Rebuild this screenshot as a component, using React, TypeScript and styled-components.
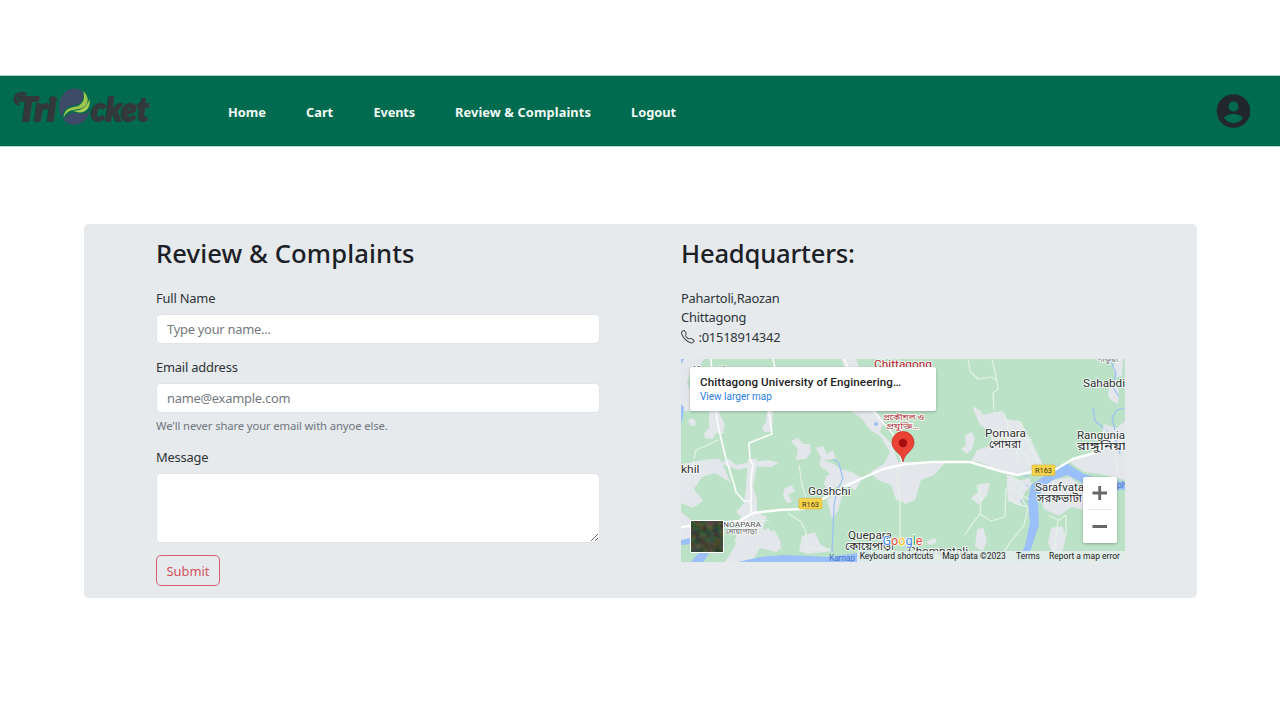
import React from "react";
import styled, { createGlobalStyle } from "styled-components";

const GlobalStyle = createGlobalStyle`
  * { box-sizing: border-box; }
  body {
    margin: 0;
    background: #fff;
    color: #2f3439;
    font-family: "Noto Sans", "Open Sans", sans-serif;
    font-size: 12.9px;
    letter-spacing: -0.2px;
  }
  h2, p { margin: 0; }
`;

const Page = styled.div`
  height: 720px;
  padding-top: 76px;
  overflow: hidden;
`;

const NavBar = styled.header`
  display: flex;
  align-items: center;
  height: 70px;
  background: #006b4e;
  box-shadow: 0 0 0 1px #b5d5ca;
`;

const Logo = styled.svg`
  width: 150px;
  height: 50px;
  margin: 0 0 8px 8px;
`;

const NavLinks = styled.nav`
  display: flex;
  flex: 1;
  padding-left: 70px;
`;

const NavLink = styled.a<{ $width: number; $spacing?: number }>`
  width: ${(p) => p.$width}px;
  padding-top: 1px;
  color: #f3faf7;
  font-size: 12.8px;
  font-weight: 700;
  letter-spacing: ${(p) => p.$spacing ?? 0}px;
  line-height: 20px;
  white-space: nowrap;
`;

const Avatar = styled.svg`
  width: 34px;
  height: 34px;
  margin: 0 30px 1px 0;
`;

const Panel = styled.main`
  display: grid;
  grid-template-columns: 444px 444px;
  column-gap: 81px;
  width: 1113px;
  height: 374px;
  margin: 78px 0 0 84px;
  padding: 14px 0 0 72px;
  border-radius: 5px;
  background: #e6eaed;
`;

const Title = styled.h2<{ $spacing: number }>`
  height: 32px;
  margin-bottom: 18px;
  color: #1b2026;
  font-size: 25.6px;
  font-weight: 500;
  letter-spacing: ${(p) => p.$spacing}px;
  line-height: 32px;
  white-space: nowrap;
`;

const Column = styled.section`
  display: flex;
  flex-direction: column;
  align-items: flex-start;
`;

const Label = styled.label`
  height: 20px;
  margin-bottom: 6px;
  line-height: 20px;
`;

const Input = styled.input`
  width: 444px;
  height: 30px;
  padding: 0 10px;
  border: 1px solid #dfe3e7;
  border-radius: 5px;
  background: #fff;
  font: inherit;
  letter-spacing: -0.25px;
  outline: 0;
  &::placeholder { color: #74797e; opacity: 1; }
`;

const Field = styled.div<{ $height: number }>`
  display: flex;
  flex-direction: column;
  height: ${(p) => p.$height}px;
`;

const Hint = styled.span`
  margin-top: 4px;
  color: #6f767d;
  font-size: 11.3px;
  letter-spacing: -0.13px;
  line-height: 17px;
`;

const TextArea = styled.textarea`
  display: block;
  width: 444px;
  height: 70px;
  border: 1px solid #dfe3e7;
  border-radius: 5px;
  background: #fff;
  font: inherit;
  outline: 0;
  resize: vertical;
`;

const Submit = styled.button`
  width: 64px;
  height: 31px;
  padding: 0;
  border: 1px solid #d6606e;
  border-radius: 5px;
  background: transparent;
  color: #d4525f;
  font: inherit;
  letter-spacing: 0;
`;

const Address = styled.p`
  height: 58px;
  margin: 1px 0 12px;
  letter-spacing: -0.23px;
  line-height: 19.3px;
  white-space: nowrap;
`;

const PhoneIcon = styled.svg`
  width: 13.5px;
  height: 13.5px;
  margin-right: 4px;
  vertical-align: -2px;
`;

const MapFrame = styled.div`
  position: relative;
  width: 444px;
  height: 203px;
  overflow: hidden;
  font-family: Roboto, sans-serif;
  letter-spacing: 0;
`;

const MapDrawing = styled.svg`
  display: block;
  width: 444px;
  height: 203px;
  text { font-family: Roboto, "Noto Sans Bengali", sans-serif; }
`;

const PlaceCard = styled.div`
  position: absolute;
  top: 8px;
  left: 9px;
  width: 246px;
  height: 44px;
  padding: 8px 10px;
  border-radius: 2px;
  background: #fff;
  box-shadow: 0 1px 3px rgba(0, 0, 0, 0.25);
  white-space: nowrap;
`;

const PlaceName = styled.div`
  color: #222;
  font-size: 11.6px;
  font-weight: 500;
  letter-spacing: 0.1px;
  line-height: 14px;
`;

const PlaceLink = styled.a`
  display: block;
  color: #2a7de1;
  font-size: 10px;
  line-height: 15px;
`;

const ZoomControl = styled.div`
  position: absolute;
  top: 118px;
  right: 8px;
  width: 34px;
  height: 66px;
  border-radius: 2px;
  background: #fff;
  box-shadow: 0 1px 3px rgba(0, 0, 0, 0.3);
`;

const Attribution = styled.div`
  position: absolute;
  right: 0;
  bottom: 0;
  display: flex;
  height: 11px;
  background: rgba(232, 238, 237, 0.85);
  color: #222;
  font-size: 8.5px;
  line-height: 11px;
  white-space: nowrap;
`;

const Credit = styled.span<{ $width: number }>`
  width: ${(p) => p.$width}px;
  text-align: center;
`;

const TricketLogo = () => (
  <Logo viewBox="8 82 150 50">
    <g
      fill="#33383a"
      stroke="#33383a"
      strokeWidth="1.8"
      strokeLinejoin="round"
      fontFamily="Lato, sans-serif"
      fontWeight="900"
      fontStyle="italic"
      fontSize="33"
    >
      <text x="17" y="120.500" textLength="39" lengthAdjust="spacingAndGlyphs">Tri</text>
      <text x="91" y="120.500" textLength="57.500" lengthAdjust="spacingAndGlyphs">cket</text>
    </g>
    <path d="M25 94C15 92 13 100 18 104" fill="none" stroke="#33383a" strokeWidth="3.500" strokeLinecap="round" />
    <ellipse cx="74.500" cy="106.700" rx="15.500" ry="18.300" fill="#3d4a68" />
    <path d="M62 121C62 108 69 106 76 105C82 104 85 98 82 90C92 96 93 106 87 113C81 115 76 112 72 113C67 114 65 117 62 121Z" fill="#006b4e" />
    <path d="M63.500 118C64 109 70 107.500 76 106.500C82 105.500 86 99 83 91C90 97 89 105 82 108C76 110.500 68 108 63.500 118Z" fill="#9fc54c" />
    <path d="M71 110.500C79 112 87 108 89.500 99C91 107 86 113 79 112.500C76 112 74 111 71 110.500Z" fill="#a9cb50" />
  </Logo>
);

const Town = "#e3e6ea";

const townAreas = [
  "M681 359H704L700 366L691 372L687 382L692 397L690 411L684 411L681 404Z",
  "M688 420L693 418L696 422L695 426L690 425Z",
  "M709 411H719L721 417L725 424L723 434L716 433L713 439L705 438L704 433L709 428Z",
  "M767 411H773L772 432L764 432L762 427L766 422Z",
  "M791 441L798 438L803 444L810 444L811 452L806 459L796 460L798 449Z",
  "M816 448L823 446L827 454L833 450L836 459L822 460Z",
  "M841 359H856L861 372L869 388L866 395L851 383Z",
  "M851 411H876L884 421L880 432L892 444L898 462H925L921 472L918 489L908 503L896 500L891 485L878 480L870 472L884 464L890 452L880 436L870 430L862 419Z",
  "M826 476L840 469L852 472L862 478L856 490L840 485L828 492L824 484Z",
  "M890 472L919 465L946 462L934 475L921 480L915 500L905 504L897 493L899 484Z",
  "M972 406L981 411L983 415L994 412L1002 411L1006 419L1020 421L1026 431L1037 452L1043 466L1031 474L1009 474L994 468L979 462L971 461L977 450L992 445L990 431L980 425L976 416Z",
  "M965 435L972 432L975 439L972 449L967 454L961 449L966 445Z",
  "M1109 388L1115 378L1119 391L1118 404L1112 401L1108 396Z",
  "M1116 359H1123L1122 376L1116 377L1113 368Z",
  "M1073 459L1091 454L1100 444L1104 424L1116 428L1125 421V480L1100 474L1084 472L1071 463Z",
  "M1007 474L1018 481L1029 478L1032 484L1025 492L1020 506L1008 501L1007 488Z",
  "M1039 487L1052 480L1070 477L1086 491L1084 510L1071 507L1059 516L1044 509L1041 500Z",
  "M1051 528L1062 526L1066 536L1063 550L1054 556L1048 543Z",
  "M978 484L990 483L987 495L979 505L971 498L979 491Z",
  "M977 530L983 527L987 541L983 551L975 547Z",
  "M681 464L703 460L713 459L720 459L725 470L731 483L725 479L715 473L702 477L694 489L703 501L693 508L681 503Z",
  "M748 459H757L756 472L753 487L757 499L757 512L767 517L763 528L768 534L774 530L781 542L777 552L760 548L752 562H725L735 546L737 530L742 518L736 512L744 503L746 488Z",
  "M784 489L792 485L795 492L788 494L792 502L787 503L783 496Z",
  "M761 532L768 528L773 534L780 542L781 549L774 552L763 543Z",
  "M802 536L815 532L820 544L832 551L808 554L799 551Z",
  "M827 500L838 490L843 492L838 511L832 519Z",
  "M681 512L690 519L690 540L681 540Z",
  "M708 459L718 464L729 459L736 465L751 462L769 460L779 463L771 467L752 466L738 470Z",
  "M820 459L834 464L844 472L837 481L829 473L820 466Z",
  "M927 541L935 538L937 542L932 545L928 544Z",
];

const minorRoads = [
  "M968 359L970 371L978 379L992 377L997 381L998 389L993 393L994 410",
  "M992 359L995 372L997 381",
  "M718 440L708 445L696 450L694 459M694 461L690 478L684 486",
  "M1004 413L1008 425L1006 437L1016 446L1018 461M1020 421L1027 439L1038 462",
  "M977 485L981 500L980 514L972 524L965 535M980 514L991 521L1005 517L1006 488",
  "M1028 508L1024 525L1009 544L1000 558",
  "M1049 516L1059 520L1066 515M1058 519L1054 553M1066 515L1066 535",
  "M1011 476L1024 484L1018 493L1029 499M1008 487L1018 492L1027 507L1016 503L1010 496",
  "M1016 446L1026 456L1029 466M1008 426L1020 438L1032 440",
  "M799 465L802 485L806 497M788 513L801 522L806 532L806 548L831 549",
  "M898 467V488L900 499V546",
  "M1103 427L1110 436L1115 454L1118 472",
  "M751 512L755 520L769 521M735 541L751 512",
];

const mainRoads = [
  "M711 359L712 375L716 411L718 426L726 459L734 484L736 492L744 501L750 501",
  "M773 359L775 368L769 411L772 434L749 443L750 459L753 465L751 479V512",
  "M844 359L848 368L873 411L893 434L898 451L903 464",
];

interface MapLabel {
  x: number;
  y: number;
  width: number;
  text: string;
  size?: number;
  color?: string;
}

const labels: MapLabel[] = [
  { x: 693, y: 374, width: 38, text: "Kagatia", size: 11 },
  { x: 874, y: 368, width: 58, text: "Chittagong", size: 11.5, color: "#b3202c" },
  { x: 1097, y: 362, width: 21, text: "পাকুয়া", size: 8, color: "#666" },
  { x: 1083, y: 387, width: 42, text: "Sahabdi", size: 11 },
  { x: 883, y: 420, width: 41, text: "প্রকৌশল ও", size: 8.6, color: "#b8323c" },
  { x: 886, y: 429, width: 33, text: "প্রযুক্তি…", size: 8.6, color: "#b8323c" },
  { x: 985, y: 437, width: 41, text: "Pomara", size: 11 },
  { x: 989, y: 448, width: 32, text: "পোমরা", size: 10.5 },
  { x: 1077, y: 439, width: 48, text: "Rangunia", size: 11 },
  { x: 1077, y: 450, width: 49, text: "রাঙ্গুনিয়া", size: 10.5 },
  { x: 681, y: 473, width: 18.5, text: "khil", size: 11 },
  { x: 808, y: 495, width: 42.5, text: "Goshchi", size: 11 },
  { x: 723, y: 526.5, width: 38, text: "NOAPARA", size: 7.3, color: "#555" },
  { x: 726, y: 534, width: 31, text: "নোয়াপাড়া", size: 8, color: "#666" },
  { x: 848, y: 539, width: 44, text: "Quepara", size: 11 },
  { x: 845, y: 550, width: 49, text: "কোয়েপাড়া", size: 10.5 },
  { x: 1035, y: 491, width: 49, text: "Sarafvata", size: 11 },
  { x: 1037, y: 502, width: 45, text: "সরফভাটা", size: 10.5 },
  { x: 908, y: 555, width: 60, text: "Chompatali", size: 11 },
];

const MapView = () => (
  <MapDrawing viewBox="681 359 444 203">
    <rect x="681" y="359" width="444" height="203" fill="#bbe2c6" />
    {townAreas.map((d) => <path key={d} d={d} fill={Town} />)}
    <g fill="#9bbff8">
      <path d="M681 359H684L682 363H681ZM681 404L684 407L683 418L681 424Z" />
      <path d="M681 540L690 538L691 544L681 545ZM691 562L700 552H710L703 562Z" />
      <path d="M738 562L760 557L784 555L830 557L857 553L870 550V562Z" />
      <path d="M1017 562L1025 546L1030 522L1028 500L1031 485L1043 477L1055 470L1059 465L1068 464L1084 474L1103 479L1125 482V490L1103 489L1085 484L1067 475L1053 480L1043 487L1038 500L1039 525L1031 549L1024 562Z" />
      <circle cx="876" cy="424" r="2" />
    </g>
    <g fill="none" stroke="#9bbff8" strokeWidth="1.2">
      <path d="M833 459L839 463L843 479L837 490L834 505L832 552" />
      <path d="M1093 408L1095 421L1105 429L1117 442L1120 454M1115 430L1112 418L1117 410L1125 408M1110 359L1116 373L1113 387L1119 397" />
      <path d="M1020 475L1029 476M1022 483L1028 486M1020 500L1027 502" strokeDasharray="3 2" />
    </g>
    <g fill="none" stroke="#e4f3e7" strokeWidth="1.2" strokeLinejoin="round">
      {minorRoads.map((d) => <path key={d} d={d} />)}
    </g>
    <g fill="none" stroke="#fafcfb" strokeWidth="1.7" strokeLinejoin="round">
      {mainRoads.map((d) => <path key={d} d={d} />)}
    </g>
    <path
      d="M681 527L739 521L753 513L779 510L803 509L823 499L843 487L863 478L883 469L906 464L933 462L970 462L1000 471L1017 475L1032 472L1053 471L1073 459L1094 453L1104 444L1125 434"
      fill="none"
      stroke="#fff"
      strokeWidth="2.4"
      strokeLinejoin="round"
    />
    {[[799, 498.5], [1032, 465]].map(([x, y]) => (
      <g key={x}>
        <rect x={x} y={y} width="23" height="10.500" rx="1" fill="#f7d34a" stroke="#d7b13a" strokeWidth=".6" />
        <text x={x + 11.5} y={y + 8} textAnchor="middle" fontSize="7.4" fill="#3b3519">R163</text>
      </g>
    ))}
    {labels.map((l) => (
      <text
        key={l.text}
        x={l.x}
        y={l.y}
        textLength={l.width}
        lengthAdjust="spacingAndGlyphs"
        fontSize={l.size}
        fill={l.color ?? "#2d3032"}
        stroke="#fff"
        strokeWidth="1.8"
        strokeOpacity=".85"
        paintOrder="stroke"
        strokeLinejoin="round"
      >
        {l.text}
      </text>
    ))}
    <text x="829" y="561" fontSize="8.500" fill="#4676c8" textLength="26">Karnap</text>
    <text x="1117" y="488" fontSize="8.500" fill="#4676c8">ph</text>
    <path d="M903 462C902 453 892 451 892 442.500A11 11 0 0 1 914 442.500C914 451 904 453 903 462Z" fill="#ea4335" stroke="#c5221f" strokeWidth=".7" />
    <circle cx="903" cy="443" r="4.200" fill="#a50e0e" />
    <text x="882.500" y="545" fontSize="12" textLength="40" lengthAdjust="spacingAndGlyphs" strokeWidth="1.500" stroke="#fff" paintOrder="stroke">
      <tspan fill="#4285f4">G</tspan>
      <tspan fill="#ea4335">o</tspan>
      <tspan fill="#fbbc04">o</tspan>
      <tspan fill="#4285f4">g</tspan>
      <tspan fill="#34a853">l</tspan>
      <tspan fill="#ea4335">e</tspan>
    </text>
    <defs>
      <filter id="terrain" x="0" y="0" width="1" height="1" colorInterpolationFilters="sRGB">
        <feTurbulence type="fractalNoise" baseFrequency=".14" numOctaves="3" seed="4" />
        <feColorMatrix values=".35 0 0 0 .07  0 .3 0 0 .14  0 0 .25 0 .08  0 0 0 0 1" />
      </filter>
    </defs>
    <rect x="690" y="520" width="34" height="33" rx="1.500" fill="#fff" />
    <rect x="691" y="521" width="32" height="31" filter="url(#terrain)" />
  </MapDrawing>
);

export default function App() {
  return (
    <>
      <GlobalStyle />
      <Page>
        <NavBar>
          <TricketLogo />
          <NavLinks>
            <NavLink $width={78}>Home</NavLink>
            <NavLink $width={67.5}>Cart</NavLink>
            <NavLink $width={81.5} $spacing={-0.15}>Events</NavLink>
            <NavLink $width={176} $spacing={0.11}>Review &amp; Complaints</NavLink>
            <NavLink $width={60}>Logout</NavLink>
          </NavLinks>
          <Avatar viewBox="0 0 34 34">
            <circle cx="17.500" cy="17" r="16.800" fill="#21272b" />
            <circle cx="17.500" cy="12.500" r="5" fill="#006b4e" />
            <path d="M8 24C9.500 21 14.500 20 17.500 20S25.500 21 27 24C24.500 27.500 21 29 17.500 29S10.500 27.500 8 24Z" fill="#006b4e" />
          </Avatar>
        </NavBar>
        <Panel>
          <Column>
            <Title $spacing={0.11}>Review &amp; Complaints</Title>
            <Field $height={69}>
              <Label>Full Name</Label>
              <Input placeholder="Type your name..." />
            </Field>
            <Field $height={90}>
              <Label>Email address</Label>
              <Input placeholder="name@example.com" />
              <Hint>We'll never share your email with anyoe else.</Hint>
            </Field>
            <Field $height={108}>
              <Label>Message</Label>
              <TextArea />
            </Field>
            <Submit type="button">Submit</Submit>
          </Column>
          <Column>
            <Title $spacing={-0.2}>Headquarters:</Title>
            <Address>
              Pahartoli,Raozan
              <br />
              Chittagong
              <br />
              <PhoneIcon viewBox="0 0 16 16" fill="currentColor">
                <path d="M3.654 1.328a.678.678 0 0 0-1.015-.063L1.605 2.300c-.483.484-.661 1.169-.450 1.770a17.568 17.568 0 0 0 4.168 6.608 17.569 17.569 0 0 0 6.608 4.168c.601.211 1.286.033 1.770-.450l1.034-1.034a.678.678 0 0 0-.063-1.015l-2.307-1.794a.678.678 0 0 0-.580-.122l-2.190.547a1.745 1.745 0 0 1-1.657-.459L5.482 8.062a1.745 1.745 0 0 1-.460-1.657l.548-2.190a.678.678 0 0 0-.122-.580L3.654 1.328zM1.884.511a1.745 1.745 0 0 1 2.612.163L6.290 2.980c.329.423.445.974.315 1.494l-.547 2.190a.678.678 0 0 0 .178.643l2.457 2.457a.678.678 0 0 0 .644.178l2.189-.547a1.745 1.745 0 0 1 1.494.315l2.306 1.794c.829.645.905 1.870.163 2.611l-1.034 1.034c-.740.740-1.846 1.065-2.877.702a18.634 18.634 0 0 1-7.010-4.420 18.634 18.634 0 0 1-4.420-7.009c-.362-1.030-.037-2.137.703-2.877L1.885.511z" />
              </PhoneIcon>
              :01518914342
            </Address>
            <MapFrame>
              <MapView />
              <PlaceCard>
                <PlaceName>Chittagong University of Engineering…</PlaceName>
                <PlaceLink>View larger map</PlaceLink>
              </PlaceCard>
              <ZoomControl>
                <svg width="34" height="66" viewBox="0 0 34 66">
                  <path d="M9.500 16H24M16.700 9V23M9.500 49.500H24" stroke="#666" strokeWidth="2.800" />
                  <path d="M5 32.500H29" stroke="#e6e6e6" />
                </svg>
              </ZoomControl>
              <Attribution>
                <Credit $width={79}>Keyboard shortcuts</Credit>
                <Credit $width={76}>Map data ©2023</Credit>
                <Credit $width={32}>Terms</Credit>
                <Credit $width={81}>Report a map error</Credit>
              </Attribution>
            </MapFrame>
          </Column>
        </Panel>
      </Page>
    </>
  );
}
